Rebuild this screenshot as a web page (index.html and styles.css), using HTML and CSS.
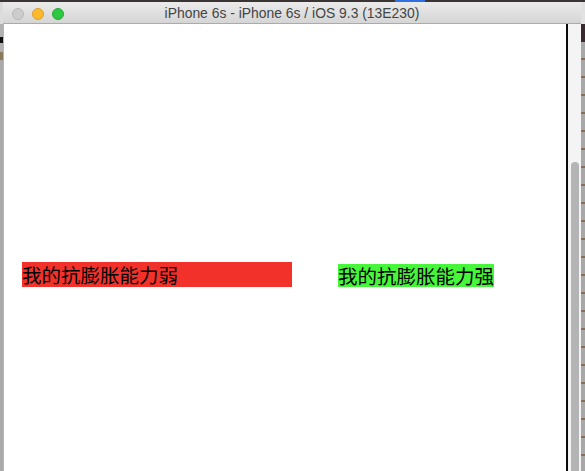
FILE: index.html
```html
<!DOCTYPE html>
<html lang="zh">
<head>
<meta charset="utf-8">
<title>iPhone 6s - iPhone 6s / iOS 9.3 (13E230)</title>
<link rel="stylesheet" href="styles.css">
</head>
<body>
<div class="desktop">
  <div class="topstrip"><span class="top-dark"></span><span class="top-blue"></span><span class="top-rest"></span></div>
  <div class="main">
    <div class="leftstrip">
      <div class="ls-title"></div>
      <div class="ls-black"></div>
      <div class="ls-tan"></div>
      <div class="ls-gray"></div>
    </div>
    <div class="window">
      <div class="titlebar">
        <div class="lights">
          <span class="light close"></span>
          <span class="light min"></span>
          <span class="light max"></span>
        </div>
        <div class="title">iPhone 6s - iPhone 6s / iOS 9.3 (13E230)</div>
        <div class="spacer"></div>
      </div>
      <div class="body">
        <div class="screen">
          <div class="row">
            <div class="label red">我的抗膨胀能力弱</div>
            <div class="label green">我的抗膨胀能力强</div>
          </div>
        </div>
        <div class="divider"></div>
        <div class="scrollpanel"><div class="thumb"></div></div>
      </div>
    </div>
    <div class="rightstrip">
      <div class="rs-title"></div>
      <div class="rs-dark"></div>
      <div class="rs-gray"></div>
    </div>
  </div>
</div>
</body>
</html>
```

FILE: styles.css
```css
* { box-sizing: border-box; }
html, body { margin: 0; padding: 0; }
body {
  width: 585px;
  height: 471px;
  overflow: hidden;
  background: #b0b0b0;
  font-family: "Liberation Sans", Arial, sans-serif;
}
.desktop {
  width: 585px;
  height: 471px;
  display: flex;
  flex-direction: column;
}
.topstrip {
  height: 2px;
  display: flex;
  flex: none;
}
.top-dark { width: 395px; background: #3b3434; }
.top-blue { width: 30px; background: #2f6fe0; }
.top-rest { flex: 1; background: #3b3434; }
.main {
  flex: 1;
  display: flex;
  min-height: 0;
}
.leftstrip {
  width: 3px;
  display: flex;
  flex-direction: column;
  flex: none;
}
.ls-title { height: 22px; background: #dcdcdc; }
.ls-black { height: 6px; margin-top: 13px; background: #111; }
.ls-tan { height: 8px; margin-top: 9px; background: #8a7a5a; }
.ls-gray { flex: 1; background: #aaaaaa; }
.window {
  width: 578px;
  display: flex;
  flex-direction: column;
  flex: none;
}
.titlebar {
  height: 22px;
  flex: none;
  display: grid;
  grid-template-columns: 1fr auto 1fr;
  align-items: center;
  background: linear-gradient(#ebebeb, #d5d5d5);
  border-bottom: 1px solid #ababab;
}
.lights {
  display: flex;
  gap: 8px;
  padding-left: 9px;
  margin-top: 2px;
}
.light {
  width: 12px;
  height: 12px;
  border-radius: 50%;
  display: block;
}
.close { background: #cdcdcd; border: 1px solid #b8b8b8; }
.min { background: #fdb92e; border: 1px solid #dfa02b; }
.max { background: #2ec841; border: 1px solid #26a837; }
.title {
  font-size: 13.9px;
  color: #444444;
  white-space: nowrap;
  margin-top: 1px;
}
.body {
  flex: 1;
  display: flex;
  min-height: 0;
  border-left: 1px solid #b5b5b5;
}
.screen {
  width: 562px;
  flex: none;
  background: #ffffff;
  padding-top: 238px;
}
.row {
  display: flex;
  align-items: flex-end;
  padding-left: 18px;
  gap: 46px;
}
.label {
  font-family: "Noto Sans CJK SC", "Noto Sans", sans-serif;
  font-size: 19.5px;
  color: #000;
  display: flex;
  align-items: center;
  white-space: nowrap;
  line-height: 1;
}
.red {
  width: 270px;
  height: 25px;
  background: #f3312b;
}
.green {
  width: 156px;
  height: 23px;
  background: #47f53b;
}
.divider {
  width: 2px;
  flex: none;
  background: #0a0a0a;
}
.scrollpanel {
  flex: 1;
  background: #f4f4f4;
  padding-top: 138px;
  padding-left: 3px;
  display: flex;
}
.thumb {
  width: 8px;
  background: #b4b4b4;
  border-radius: 4px 4px 0 0;
}
.rightstrip {
  width: 4px;
  flex: none;
  display: flex;
  flex-direction: column;
}
.rs-title { height: 22px; background: #e2e2e2; }
.rs-dark { height: 18px; background: #3a2a30; }
.rs-gray { flex: 1; background: repeating-linear-gradient(#a8a8a8 0 16px, #8a7050 16px 18px); }
```
